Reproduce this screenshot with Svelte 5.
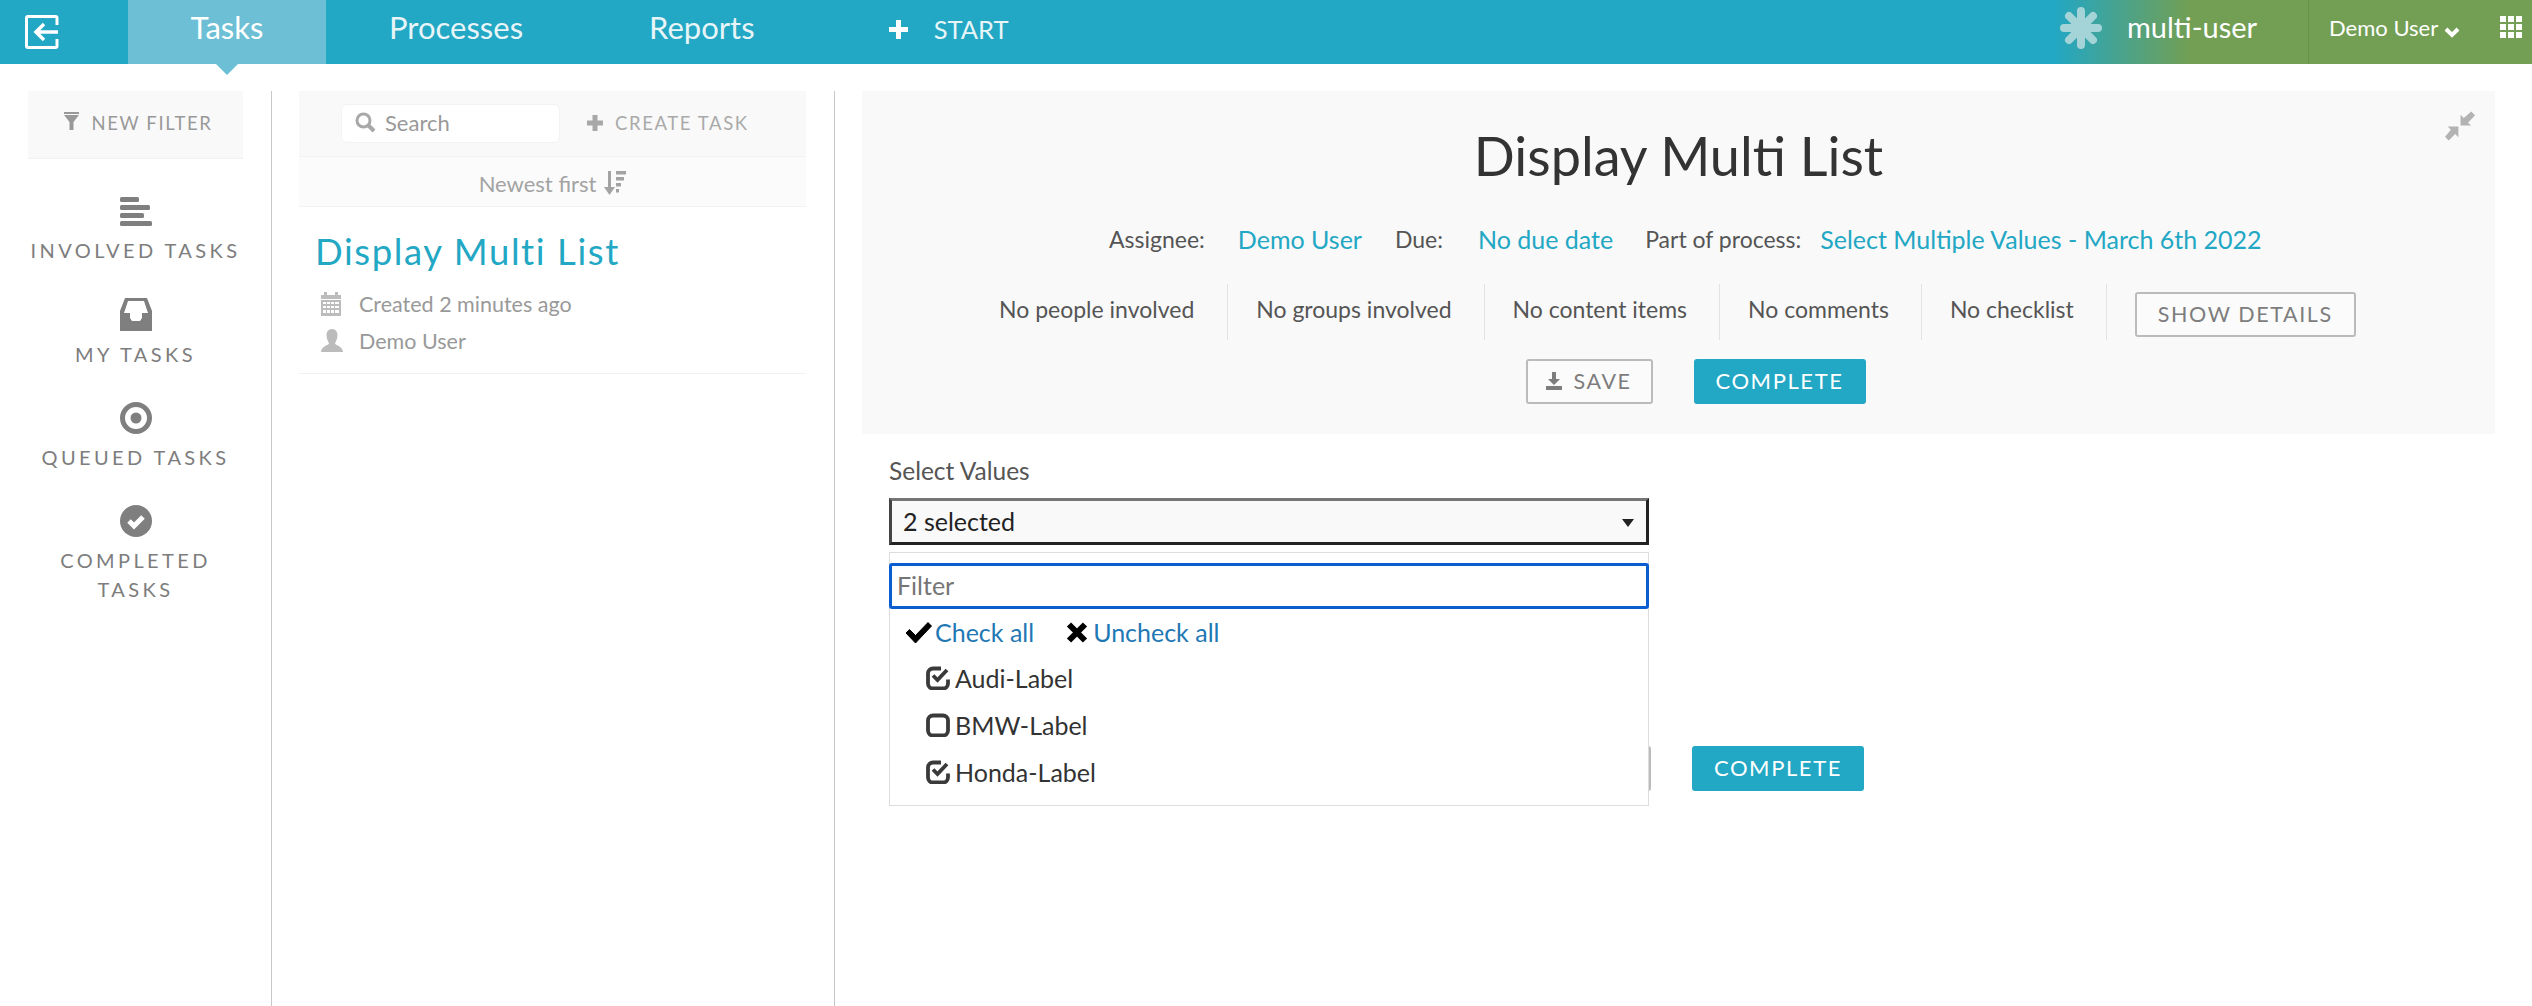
<script>
	const filters = [
		{ id: 'involved', label: 'INVOLVED TASKS' },
		{ id: 'my', label: 'MY TASKS' },
		{ id: 'queued', label: 'QUEUED TASKS' },
		{ id: 'completed', label: 'COMPLETED TASKS' }
	];

	const people = ['No people involved', 'No groups involved', 'No content items', 'No comments', 'No checklist'];

	const options = [
		{ label: 'Audi-Label', checked: true },
		{ label: 'BMW-Label', checked: false },
		{ label: 'Honda-Label', checked: true }
	];
</script>

<header class="topBar">
	<a class="logout" href="#top" aria-label="Logout">
		<svg width="34" height="34" viewBox="0 0 34 34">
			<path d="M32 10V3a1.500 1.500 0 0 0-1.500-1.500h-28A1.500 1.500 0 0 0 1.500 3v28a1.500 1.500 0 0 0 1.500 1.500h27.500A1.500 1.500 0 0 0 32 31v-7" fill="none" stroke="#fff" stroke-width="3" />
			<path d="M33 17H12M19 9l-8 8 8 8" fill="none" stroke="#fff" stroke-width="3.500" />
		</svg>
	</a>
	<nav class="tabs">
		<a class="tab active" href="#top">Tasks</a>
		<a class="tab processes" href="#top">Processes</a>
		<a class="tab reports" href="#top">Reports</a>
		<a class="start" href="#top">
			<svg width="19" height="19" viewBox="0 0 19 19"><path d="M9.500 0v19M0 9.500h19" stroke="#fff" stroke-width="5" /></svg>
			START
		</a>
	</nav>
	<div class="tenant">
		<svg width="42" height="42" viewBox="0 0 42 42" class="snowflake">
			<g stroke="#a5d4d8" stroke-width="8" stroke-linecap="round">
				<path d="M21 4v34M4 21h34M9 9l24 24M33 9L9 33" />
			</g>
		</svg>
		<span class="tenantName">multi-user</span>
	</div>
	<div class="user">
		Demo User
		<svg width="16" height="12" viewBox="0 0 16 12"><path d="M2 3l6 6 6-6" fill="none" stroke="#fff" stroke-width="4" /></svg>
	</div>
	<div class="apps">
		{#each Array(9) as _}
			<span></span>
		{/each}
	</div>
</header>

<div class="content">
	<aside class="filters">
		<button class="newFilter">
			<svg width="15" height="18" viewBox="0 0 15 18"><path d="M0 0h15v2H0zM0 3h15L9.500 10v8h-4v-8z" fill="#999" /></svg>
			NEW FILTER
		</button>
		<ul class="filterList">
			{#each filters as filter}
				<li class="filterItem">
					{#if filter.id === 'involved'}
						<svg width="32" height="30" viewBox="0 0 32 30" fill="#7f7f7f">
							<rect width="19" height="5" rx="1.500" />
							<rect y="8" width="30" height="5" rx="1.500" />
							<rect y="16" width="24" height="5" rx="1.500" />
							<rect y="24" width="32" height="5" rx="1.500" />
						</svg>
					{:else if filter.id === 'my'}
						<svg width="32" height="33" viewBox="0 0 32 33">
							<path fill="#7f7f7f" d="M5 0h22l5 13v20H0V13z" />
							<path fill="#fff" d="M8 3h16l4 12h-6v5l-2 3h-8l-2-3v-5H4z" />
						</svg>
					{:else if filter.id === 'queued'}
						<svg width="32" height="32" viewBox="0 0 32 32">
							<circle cx="16" cy="16" r="13.500" fill="none" stroke="#7f7f7f" stroke-width="5" />
							<circle cx="16" cy="16" r="5.500" fill="#7f7f7f" />
						</svg>
					{:else}
						<svg width="32" height="32" viewBox="0 0 32 32">
							<circle cx="16" cy="16" r="16" fill="#7f7f7f" />
							<path d="M9 16l5 5 9-9" fill="none" stroke="#fff" stroke-width="5" />
						</svg>
					{/if}
					<span class="filterLabel">{filter.label}</span>
				</li>
			{/each}
		</ul>
	</aside>

	<section class="taskList">
		<div class="listHeader">
			<label class="search">
				<svg width="21" height="21" viewBox="0 0 21 21">
					<circle cx="8.500" cy="8.500" r="6.500" fill="none" stroke="#a8a8a8" stroke-width="3" />
					<path d="M13 13l6 6" stroke="#a8a8a8" stroke-width="4" />
				</svg>
				<span>Search</span>
			</label>
			<a class="createTask" href="#top">
				<svg width="16" height="16" viewBox="0 0 16 16"><path d="M8 0v16M0 8h16" stroke="#a8a8a8" stroke-width="5" /></svg>
				CREATE TASK
			</a>
		</div>
		<div class="sortRow">
			Newest first
			<svg width="22" height="24" viewBox="0 0 22 24" fill="#a3a3a3">
				<path d="M4 0h3v16h4l-5.500 8L0 16h4z" />
				<rect x="12" width="10" height="3.500" /><rect x="12" y="6" width="8" height="3.500" /><rect x="12" y="12" width="5" height="3.500" /><rect x="12" y="18" width="3" height="3.500" />
			</svg>
		</div>
		<article class="taskItem">
			<h2 class="taskTitle">Display Multi List</h2>
			<div class="taskMeta">
				<svg class="calendar" width="20" height="24" viewBox="0 0 20 24" fill="#bcbcbc">
					<path d="M0 3h3V0h3v3h8V0h3v3h3v4H0z" />
					<path fill-rule="evenodd" d="M0 8h20v16H0zM2 10v2h3v-2zm4 0v2h3v-2zm4 0v2h3v-2zm4 0v2h4v-2zM2 14v2h3v-2zm4 0v2h3v-2zm4 0v2h3v-2zm4 0v2h4v-2zM2 18v3h3v-3zm4 0v3h3v-3zm4 0v3h3v-3zm4 0v3h4v-3z" />
				</svg>
				<span>Created 2 minutes ago</span>
			</div>
			<div class="taskMeta">
				<svg width="22" height="23" viewBox="0 0 22 23" fill="#bcbcbc">
					<path d="M11 0c4 0 5.500 3 5.500 6.500S14.500 13 14 14.500c1 2 8 3 8 8.500H0c0-5.500 7-6.500 8-8.500C7.500 13 5.500 10 5.500 6.500S7 0 11 0z" />
				</svg>
				<span>Demo User</span>
			</div>
		</article>
	</section>

	<main class="detail">
		<div class="summary">
			<svg class="collapse" width="30" height="30" viewBox="0.500 2.500 28 28" fill="#b3b3b3">
				<path d="M15 16V6l3 3 7-6 3.500 3.500-6.500 7 3 2.500z" />
				<path d="M13 17H3l3 3-5.500 6.500L4 30l6-6 3 3z" />
			</svg>
			<h1 class="title">Display Multi List</h1>
			<div class="facts">
				<span class="factLabel">Assignee:</span>
				<a class="factLink assignee" href="#top">Demo User</a>
				<span class="factLabel">Due:</span>
				<a class="factLink dueDate" href="#top">No due date</a>
				<span class="factLabel">Part of process:</span>
				<a class="factLink process" href="#top">Select Multiple Values - March 6th 2022</a>
			</div>
			<div class="people">
				{#each people as item}
					<span class="peopleItem">{item}</span>
				{/each}
				<button class="btn showDetails">SHOW DETAILS</button>
			</div>
			<div class="actions">
				<button class="btn save">
					<svg width="16" height="18" viewBox="0 0 16 18" fill="#7d7d7d"><path d="M6 0h4v7h4l-6 6-6-6h4zM0 14h16v4H0z" /></svg>
					SAVE
				</button>
				<button class="btn primary">COMPLETE</button>
			</div>
		</div>

		<form class="taskForm">
			<div class="formLabel">Select Values</div>
			<div class="selectWrap">
				<div class="selectBox">
					<span>2 selected</span>
					<i class="caret"></i>
				</div>
				<div class="dropdown">
					<div class="filterInput">Filter</div>
					<div class="bulk">
						<a href="#top">
							<svg width="26" height="21" viewBox="0 0 26 21"><path d="M0 11l3.500-3.500 6 6L22 .5 25.500 4 9.500 21z" fill="#000" stroke="#000" stroke-linejoin="round" /></svg>
							Check all
						</a>
						<a href="#top">
							<svg class="cross" width="22" height="21" viewBox="0 0 22 21"><path d="M3 2.500l16 16M19 2.500l-16 16" fill="none" stroke="#000" stroke-width="6" /></svg>
							Uncheck all
						</a>
					</div>
					{#each options as option}
						<div class="option">
							<svg width="24" height="24" viewBox="0 0 24 24" fill="none" stroke="#3a3a3a" stroke-width="3.800">
								{#if option.checked}
									<path d="M15 2.500H7A5 5 0 0 0 2 7.500v10a5 5 0 0 0 5 5h10a5 5 0 0 0 5-5v-4" />
									<path d="M7 9.500l4.500 4.500 9.500-10" />
								{:else}
									<rect x="2" y="2.500" width="20" height="20" rx="5" />
								{/if}
							</svg>
							<span>{option.label}</span>
						</div>
					{/each}
				</div>
			</div>
			<div class="formActions">
				<button type="button" class="btn hiddenSave">SAVE</button>
				<button type="button" class="btn primary">COMPLETE</button>
			</div>
		</form>
	</main>
</div>

<style>
	:global(body) {
		margin: 0;
		background: #fff;
		font-family: Lato, 'Open Sans', sans-serif;
		color: #333;
	}

	a {
		text-decoration: none;
	}

	ul {
		list-style: none;
		margin: 0;
		padding: 0;
	}

	.topBar {
		display: flex;
		align-items: center;
		height: 64px;
		background: linear-gradient(90deg, #22a7c4 0, #22a7c4 2054px, #729f54 2190px);
		color: #fff;
	}

	.logout {
		display: flex;
		width: 128px;
		padding-left: 25px;
		box-sizing: border-box;
	}

	.tabs {
		display: flex;
		align-items: center;
		flex: 1;
		height: 100%;
	}

	.tab {
		color: #e7f5f8;
		font-size: 31px;
		line-height: 55px;
		height: 64px;
		box-sizing: border-box;
	}

	.tab.active {
		position: relative;
		width: 198px;
		text-align: center;
		color: #fff;
		background: #6cbfd4;
	}

	.tab.active::after {
		content: '';
		position: absolute;
		left: 88px;
		top: 64px;
		border-left: 11px solid transparent;
		border-right: 11px solid transparent;
		border-top: 11px solid #6cbfd4;
	}

	.processes {
		margin-left: 63px;
	}

	.reports {
		margin-left: 126px;
	}

	.start {
		display: flex;
		align-items: center;
		gap: 26px;
		margin-left: 134px;
		padding-bottom: 6px;
		color: #e7f5f8;
		font-size: 25.500px;
	}

	.tenant {
		display: flex;
		align-items: center;
		gap: 25px;
		width: 248px;
		box-sizing: border-box;
		height: 100%;
		padding-bottom: 8px;
	}

	.tenantName {
		padding-bottom: 4px;
		font-size: 29px;
	}

	.user {
		display: flex;
		align-items: center;
		gap: 6px;
		height: 100%;
		width: 192px;
		box-sizing: border-box;
		padding: 0 0 10px 20px;
		border-left: 1px solid #66934a;
		font-size: 22px;
	}

	.user svg {
		margin-top: 10px;
	}

	.apps {
		display: grid;
		grid-template-columns: repeat(3, 6px);
		grid-auto-rows: 6px;
		gap: 2px;
		margin: 0 10px 10px 0;
	}

	.apps span {
		background: #fff;
	}

	.content {
		display: flex;
		align-items: stretch;
		height: 915px;
		margin-top: 27px;
	}

	.filters {
		width: 272px;
		padding: 0 28px;
		box-sizing: border-box;
		border-right: 1px solid #c8c8c8;
		flex: none;
	}

	.newFilter {
		display: flex;
		justify-content: center;
		gap: 12px;
		width: 215px;
		height: 68px;
		padding: 21px 0 0 6px;
		border: 0;
		border-bottom: 1px solid #f2f2f2;
		background: #f9f9f9;
		color: #999;
		font: 18.500px Lato, sans-serif;
		letter-spacing: 1.600px;
	}

	.filterList {
		margin-top: 38px;
	}

	.filterItem {
		display: flex;
		flex-direction: column;
		align-items: center;
		margin-bottom: 33px;
		text-align: center;
	}

	.filterLabel {
		margin-top: 9px;
		font-size: 20px;
		line-height: 29px;
		letter-spacing: 3.400px;
		color: #7d7d7d;
	}

	.taskList {
		width: 507px;
		margin-left: 27px;
		flex: none;
	}

	.listHeader {
		display: flex;
		align-items: center;
		height: 66px;
		padding-left: 42px;
		box-sizing: border-box;
		background: #f9f9f9;
		border-bottom: 1px solid #f2f2f2;
	}

	.search {
		display: flex;
		align-items: center;
		gap: 9px;
		width: 219px;
		height: 39px;
		padding: 0 0 2px 13px;
		box-sizing: border-box;
		background: #fff;
		border-radius: 6px;
		border: 1px solid #f3f3f3;
		font-size: 22px;
		color: #999;
	}

	.createTask {
		display: flex;
		align-items: center;
		gap: 12px;
		margin-left: 27px;
		padding-bottom: 2px;
		color: #aaa;
		font-size: 18.500px;
		letter-spacing: 1.600px;
	}

	.sortRow {
		display: flex;
		align-items: center;
		justify-content: center;
		gap: 8px;
		height: 50px;
		box-sizing: border-box;
		padding-top: 3px;
		background: #fbfbfb;
		border-bottom: 1px solid #f2f2f2;
		font-size: 22px;
		color: #a3a3a3;
	}

	.taskItem {
		height: 167px;
		box-sizing: border-box;
		padding: 22px 0 0 16px;
		border-bottom: 1px solid #f2f2f2;
	}

	.taskTitle {
		margin: 0 0 12px;
		font-size: 36.500px;
		font-weight: 400;
		line-height: 44px;
		letter-spacing: 1.600px;
		color: #22a7c4;
	}

	.taskMeta {
		display: flex;
		align-items: center;
		gap: 16px;
		height: 37px;
		padding-left: 6px;
		font-size: 21.500px;
		color: #999;
	}

	.taskMeta svg {
		flex: none;
	}

	.taskMeta .calendar {
		margin-right: 2px;
	}

	.detail {
		flex: 1;
		margin-left: 28px;
		padding-left: 27px;
		border-left: 1px solid #c8c8c8;
		margin-right: 37px;
		min-width: 0;
	}

	.summary {
		position: relative;
		height: 343px;
		box-sizing: border-box;
		padding-top: 30px;
		background: #f9f9f9;
		text-align: center;
	}

	.collapse {
		position: absolute;
		top: 20px;
		right: 20px;
	}

	.title {
		margin: 0;
		font-size: 54px;
		font-weight: 400;
		line-height: 70px;
		color: #333;
	}

	.facts {
		display: flex;
		align-items: center;
		height: 40px;
		margin-top: 28px;
		padding-left: 247px;
		font-size: 23px;
		color: #555;
	}

	.factLink {
		font-size: 25px;
		color: #22a7c4;
	}

	.assignee {
		margin-left: 33px;
		margin-right: 33px;
	}

	.dueDate {
		margin-left: 35px;
		margin-right: 32px;
	}

	.process {
		margin-left: 19px;
	}

	.people {
		display: flex;
		align-items: flex-start;
		margin-top: 25px;
		padding-left: 109px;
		font-size: 23px;
		color: #555;
	}

	.peopleItem {
		height: 56px;
		line-height: 50px;
		padding: 0 32px 0 28px;
		border-right: 1px solid #e3e3e3;
	}

	.peopleItem:first-child {
		padding: 0 33px 0 28px;
	}

	.btn {
		height: 45px;
		box-sizing: border-box;
		border: 2px solid #bbb;
		border-radius: 3px;
		background: #fbfbfb;
		color: #7d7d7d;
		font: 21.500px Lato, sans-serif;
		letter-spacing: 1.600px;
		padding-bottom: 3px;
	}

	.btn.primary {
		width: 172px;
		border-color: #22a7c4;
		background: #22a7c4;
		color: #fff;
		font-size: 22px;
	}

	.showDetails {
		width: 221px;
		margin: 8px 0 0 28px;
	}

	.actions {
		display: flex;
		justify-content: center;
		gap: 41px;
		margin-top: 19px;
		padding-left: 34px;
	}

	.save {
		display: flex;
		align-items: center;
		justify-content: center;
		gap: 11px;
		width: 127px;
	}

	.taskForm {
		padding: 23px 0 0 27px;
	}

	.formLabel {
		height: 41px;
		font-size: 24.500px;
		line-height: 28px;
		color: #555;
	}

	.selectWrap {
		position: relative;
		width: 760px;
	}

	.selectBox {
		display: flex;
		align-items: center;
		justify-content: space-between;
		height: 47px;
		box-sizing: border-box;
		padding: 0 12px 2px 11px;
		border: 3px solid;
		border-color: #767676 #222 #222 #444;
		background: #f9f9f9;
		font-size: 25px;
		color: #222;
	}

	.caret {
		border-left: 6px solid transparent;
		border-right: 6px solid transparent;
		border-top: 8px solid #222;
		margin-top: 5px;
	}

	.dropdown {
		position: absolute;
		top: 54px;
		left: 0;
		right: 0;
		z-index: 5;
		height: 254px;
		box-sizing: border-box;
		padding-top: 10px;
		background: #fff;
		border: 1px solid #ddd;
	}

	.filterInput {
		height: 46px;
		box-sizing: border-box;
		padding-left: 5px;
		border: 3px solid #0b5ed0;
		border-radius: 3px;
		margin: 0 -1px;
		font-size: 25px;
		line-height: 38px;
		color: #757575;
	}

	.bulk {
		display: flex;
		gap: 32px;
		padding: 3px 0 0 16px;
		margin-bottom: 2px;
	}

	.bulk a {
		display: flex;
		align-items: center;
		gap: 3px;
		height: 40px;
		font-size: 25px;
		color: #1f78b4;
	}

	.bulk .cross {
		margin-right: 2px;
	}

	.option {
		display: flex;
		align-items: center;
		gap: 5px;
		height: 47px;
		padding-left: 36px;
		font-size: 25px;
		color: #333;
	}

	.formActions {
		display: flex;
		gap: 41px;
		margin-top: 201px;
	}

	.hiddenSave {
		width: 762px;
		background: #fff;
		color: transparent;
	}
</style>
